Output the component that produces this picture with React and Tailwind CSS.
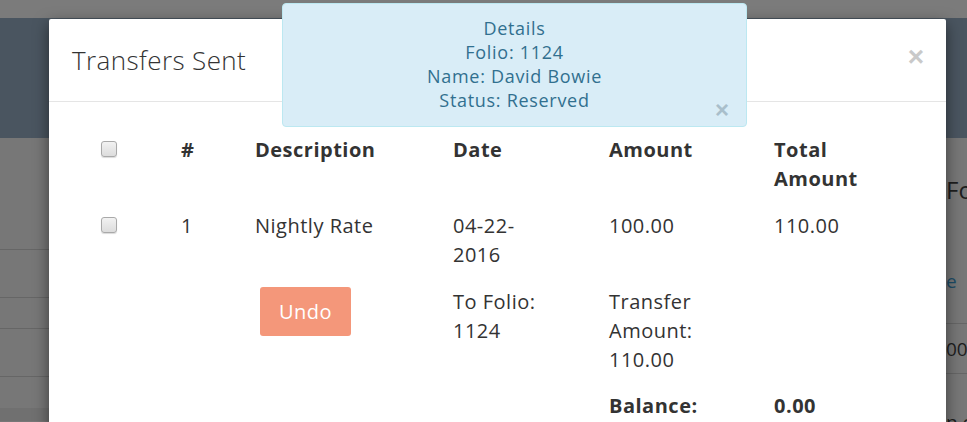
import React from 'react';

const Check = () => (
  <span className="mt-[6px] block h-4 w-4 rounded-[3px] border border-[#a9a9a9] bg-gradient-to-b from-[#f2f2f2] to-[#dcdcdc] shadow-[0_1px_1px_rgba(0,0,0,0.15)]" />
);

const Row = ({ cells, bold, pad = 'py-[9px]' }) => (
  <div className={`grid grid-cols-[80px_74px_198px_156px_165px_1fr] leading-[29px] ${pad} ${bold ? 'font-bold' : ''}`}>
    {cells.map((c, i) => (
      <div key={i}>{c}</div>
    ))}
  </div>
);

const App = () => (
  <div className="relative h-[422px] w-[967px] overflow-hidden bg-[#777777] font-['Open_Sans',sans-serif] text-[20px] tracking-[0.5px] text-[#333]">
    {/* dimmed page behind */}
    <div className="h-[18px] bg-[#7b7b7b]" />
    <div className="h-[120px] bg-[#4a5560]" />
    <div className="flex justify-between">
      <div className="flex w-[49px] flex-col">
        <div className="h-[112px] border-b border-[#666]" />
        <div className="h-[48px] border-b border-[#666]" />
        <div className="h-[31px] border-b border-[#666]" />
        <div className="h-[48px] border-b border-[#666]" />
        <div className="h-[31px]" />
        <div className="h-[13px] bg-[#707070]" />
      </div>
      <div className="flex w-[21px] flex-col whitespace-nowrap tracking-normal">
        <div className="h-[186px] border-b border-[#666] pt-[36px]">
          <div className="text-[24px] leading-[32px] text-[#1e1e1e]">Fo</div>
          <div className="pt-[61px] text-[19px] leading-[28px] text-[#1d4c66]">e</div>
        </div>
        <div className="h-[50px] border-b border-[#666] pt-[11px] text-[19px] leading-[28px] text-[#1e1e1e]">00</div>
        <div className="pt-[34px] text-[19px] leading-[28px] text-[#1e1e1e]">n c</div>
      </div>
    </div>

    {/* modal */}
    <div className="absolute left-[49px] top-[19px] h-[460px] w-[897px] rounded-t-[2px] bg-white shadow-[0_5px_15px_rgba(0,0,0,0.5)]">
      <div className="flex h-[83px] items-center justify-between border-b border-[#e5e5e5] pl-[23px] pr-[22px]">
        <h4 className="text-[26px] font-light tracking-[0.4px] text-[#333]">Transfers Sent</h4>
        <span className="mb-[6px] font-['Liberation_Sans',sans-serif] text-[28px] font-bold leading-none tracking-normal text-[#c9c9c9]">×</span>
      </div>
      <div className="pl-[52px] pt-[24px]">
        <Row bold cells={[<Check />, '#', 'Description', 'Date', 'Amount', <>Total<br />Amount</>]} />
        <Row cells={[<Check />, '1', 'Nightly Rate', <>04-22-<br />2016</>, '100.00', '110.00']} />
        <Row
          cells={[
            '',
            '',
            <button className="ml-[5px] h-[49px] w-[91px] rounded-[3px] bg-[#f4977a] text-[20px] text-white">Undo</button>,
            <>To Folio:<br />1124</>,
            <>Transfer<br />Amount:<br />110.00</>,
            '',
          ]}
        />
        <Row bold pad="pt-[8px] pb-[9px]" cells={['', '', '', '', 'Balance:', '0.00']} />
      </div>
    </div>

    {/* info popover */}
    <div className="absolute left-[282px] top-[3px] h-[124px] w-[465px] rounded-[4px] border border-[#bce8f1] bg-[#d9edf7] pt-[12px] text-center text-[18px] leading-[24px] tracking-[0.7px] text-[#31708f]">
      <div>Details</div>
      <div>Folio: 1124</div>
      <div>Name: David Bowie</div>
      <div>Status: Reserved</div>
      <span className="absolute right-[17px] top-[94px] font-['Liberation_Sans',sans-serif] text-[24px] font-bold leading-none tracking-normal text-[#a9bfcb]">×</span>
    </div>
  </div>
);

export default App;
